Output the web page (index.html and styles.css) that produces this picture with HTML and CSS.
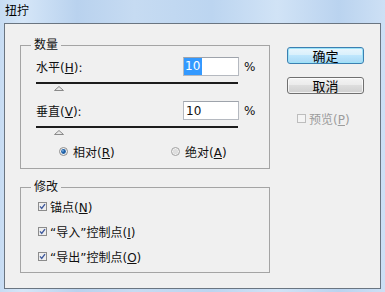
FILE: index.html
```html
<!DOCTYPE html>
<html lang="zh-CN">
<head>
    <meta charset="UTF-8">
    <meta name="viewport" content="width=device-width, initial-scale=1.0">
    <title>扭拧</title>
    <link rel="stylesheet" href="styles.css">
</head>
<body>
    <div class="window">
        <div class="titlebar">扭拧</div>

        <div class="client">
            <div class="left">
                <fieldset class="group">
                    <legend>数量</legend>
                    <div class="group-body amount">
                        <div class="row">
                            <span class="label">水平(<u>H</u>):</span>
                            <div class="field"><span class="sel">10</span></div>
                            <span class="unit">%</span>
                        </div>
                        <div class="slider">
                            <div class="track"></div>
                            <svg class="thumb" width="10" height="5" viewBox="0 0 10 5"><polygon points="0.5,4.5 5,0.5 9.5,4.5" fill="#e8e8e8" stroke="#8a8a8a"/></svg>
                        </div>

                        <div class="row">
                            <span class="label">垂直(<u>V</u>):</span>
                            <div class="field"><span class="val">10</span></div>
                            <span class="unit">%</span>
                        </div>
                        <div class="slider">
                            <div class="track"></div>
                            <svg class="thumb" width="10" height="5" viewBox="0 0 10 5"><polygon points="0.5,4.5 5,0.5 9.5,4.5" fill="#e8e8e8" stroke="#8a8a8a"/></svg>
                        </div>

                        <div class="radios">
                            <span class="radio first">
                                <svg class="dot" width="9" height="9" viewBox="0 0 9 9">
                                    <circle cx="4.5" cy="4.5" r="4" fill="#f2f2f2" stroke="#8c8c8c"/>
                                    <circle cx="4.5" cy="4.5" r="2.4" fill="#1d5fa6"/>
                                    <circle cx="3.9" cy="3.8" r="0.9" fill="#7fb2e6"/>
                                </svg>
                                <span>相对(<u>R</u>)</span>
                            </span>
                            <span class="radio">
                                <svg class="dot" width="9" height="9" viewBox="0 0 9 9">
                                    <circle cx="4.5" cy="4.5" r="4" fill="#f4f4f4" stroke="#a0a0a0"/>
                                    <circle cx="4.5" cy="4.5" r="2.6" fill="#dedede"/>
                                </svg>
                                <span>绝对(<u>A</u>)</span>
                            </span>
                        </div>
                    </div>
                </fieldset>

                <fieldset class="group modify">
                    <legend>修改</legend>
                    <div class="group-body">
                        <div class="check">
                            <svg class="box" width="9" height="9" viewBox="0 0 9 9">
                                <rect x="0.5" y="0.5" width="8" height="8" fill="#eeeeee" stroke="#8c8c8c"/>
                                <path d="M2 4.4 L3.7 6.4 L7 2.1" fill="none" stroke="#3f5a9e" stroke-width="1.4"/>
                            </svg>
                            <span>锚点(<u>N</u>)</span>
                        </div>
                        <div class="check">
                            <svg class="box" width="9" height="9" viewBox="0 0 9 9">
                                <rect x="0.5" y="0.5" width="8" height="8" fill="#eeeeee" stroke="#8c8c8c"/>
                                <path d="M2 4.4 L3.7 6.4 L7 2.1" fill="none" stroke="#3f5a9e" stroke-width="1.4"/>
                            </svg>
                            <span>“导入”控制点(<u>I</u>)</span>
                        </div>
                        <div class="check">
                            <svg class="box" width="9" height="9" viewBox="0 0 9 9">
                                <rect x="0.5" y="0.5" width="8" height="8" fill="#eeeeee" stroke="#8c8c8c"/>
                                <path d="M2 4.4 L3.7 6.4 L7 2.1" fill="none" stroke="#3f5a9e" stroke-width="1.4"/>
                            </svg>
                            <span>“导出”控制点(<u>O</u>)</span>
                        </div>
                    </div>
                </fieldset>
            </div>

            <div class="right">
                <button class="btn default">确定</button>
                <button class="btn">取消</button>
                <div class="check disabled">
                    <svg class="box" width="9" height="9" viewBox="0 0 9 9">
                        <rect x="0.5" y="0.5" width="8" height="8" fill="#f4f4f4" stroke="#bdbdbd"/>
                    </svg>
                    <span>预览(<u>P</u>)</span>
                </div>
            </div>
        </div>
    </div>
</body>
</html>
```

FILE: styles.css
```css
body {
    margin: 0;
    font-family: "DejaVu Sans", "Noto Sans CJK SC", sans-serif;
    font-size: 12px;
    color: #111;
}
.window {
    width: 385px;
    height: 292px;
    box-sizing: border-box;
    padding: 0 4px 3px 4px;
    background: linear-gradient(to right, #c7dcf3 0%, #d5e6f8 6%, #b9d2ee 20%, #c6dbf2 35%, #bcd5f0 55%, #d1e3f6 72%, #bad3ef 88%, #cde0f5 100%);
}
.titlebar {
    height: 23px;
    box-sizing: border-box;
    padding: 2px 0 0 1px;
    line-height: 16px;
    font-family: "Noto Sans CJK SC", sans-serif;
    color: #000;
}
.client {
    height: 266px;
    box-sizing: border-box;
    border: 1px solid #6a7581;
    background: #f0f0f0;
    display: flex;
    padding: 14px 0 0 15px;
}
.group {
    width: 250px;
    box-sizing: border-box;
    margin: 0;
    padding: 0;
    border: 1px solid #a4a4a4;
    min-width: 0;
}
.group legend {
    margin-left: 10px;
    padding: 0 3px;
    line-height: 14px;
}
.group-body {
    padding: 0 0 3px 16px;
}
.amount {
    padding: 5px 0 11px 15px;
}
.modify {
    margin-top: 11px;
}
.row {
    display: flex;
    align-items: center;
    height: 19px;
}
.label {
    width: 147px;
}
.field {
    width: 56px;
    height: 19px;
    box-sizing: border-box;
    border: 1px solid #b5b9c0;
    border-top-color: #9ea3ab;
    background: #fff;
    display: flex;
    align-items: center;
}
.sel {
    display: block;
    width: 18px;
    height: 100%;
    box-sizing: border-box;
    padding-left: 1px;
    background: #3399ff;
    color: #fff;
    line-height: 17px;
}
.val {
    padding-left: 2px;
}
.unit {
    margin-left: 5px;
}
.slider {
    height: 25px;
    box-sizing: border-box;
    padding-top: 6px;
}
.track {
    width: 202px;
    height: 2px;
    background: #1c1c1c;
}
.thumb {
    display: block;
    margin: 2px 0 0 18px;
}
.radios {
    display: flex;
    align-items: center;
    height: 12px;
    padding-left: 23px;
}
.radio {
    display: flex;
    align-items: center;
    gap: 5px;
}
.radio.first {
    width: 112px;
}
.check {
    display: flex;
    align-items: center;
    gap: 3px;
    height: 25px;
    padding-left: 1px;
}
.right {
    display: flex;
    flex-direction: column;
    align-items: flex-start;
    margin: 9px 0 0 17px;
}
.btn {
    width: 77px;
    height: 17px;
    padding: 0;
    font-family: "Noto Sans CJK SC", sans-serif;
    font-size: 13px;
    line-height: 15px;
    color: #000;
    border: 1px solid #707070;
    border-radius: 3px;
    background: linear-gradient(#f4f4f4 0%, #ebebeb 45%, #dddddd 50%, #cfcfcf 100%);
    box-shadow: inset 0 0 0 1px rgba(255, 255, 255, 0.7);
}
.btn.default {
    border-color: #3c7fb1;
    background: linear-gradient(#eaf6fd 0%, #d9f0fc 45%, #bee6fd 50%, #a7d9f5 100%);
    box-shadow: inset 0 0 0 1px #9ce3f8;
}
.btn + .btn {
    margin-top: 13px;
}
.check.disabled {
    height: 9px;
    margin: 20px 0 0 9px;
    color: #9c9c9c;
}
```
